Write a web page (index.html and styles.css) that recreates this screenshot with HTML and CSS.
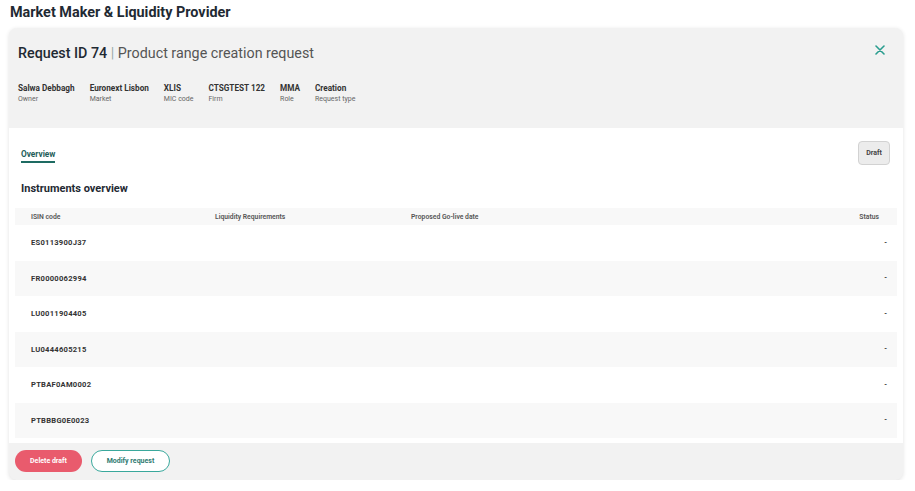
FILE: index.html
```html
<!DOCTYPE html>
<html lang="en">
<head>
    <meta charset="UTF-8">
    <meta name="viewport" content="width=device-width, initial-scale=1.0">
    <title>Market Maker &amp; Liquidity Provider</title>
    <link rel="stylesheet" href="styles.css">
</head>
<body>
    <h1 class="page-title">Market Maker &amp; Liquidity Provider</h1>

    <div class="card">
        <div class="card-head">
            <div class="head-row">
                <h2 class="req-title">Request ID 74 <span class="sep">|</span> <span class="req-sub">Product range creation request</span></h2>
                <button class="close" aria-label="Close">
                    <svg width="10" height="10" viewBox="0 0 10 10"><path d="M1 1 L9 9 M9 1 L1 9" stroke="#2a9d8f" stroke-width="1.6" stroke-linecap="round"/></svg>
                </button>
            </div>
            <div class="meta">
                <div class="meta-item"><b>Salwa Debbagh</b><span>Owner</span></div>
                <div class="meta-item"><b>Euronext Lisbon</b><span>Market</span></div>
                <div class="meta-item"><b>XLIS</b><span>MIC code</span></div>
                <div class="meta-item"><b>CTSGTEST 122</b><span>Firm</span></div>
                <div class="meta-item"><b>MMA</b><span>Role</span></div>
                <div class="meta-item"><b>Creation</b><span>Request type</span></div>
            </div>
        </div>

        <div class="card-body">
            <div class="tabs-row">
                <a class="tab active">Overview</a>
                <button class="btn-draft">Draft</button>
            </div>

            <h3 class="section-title">Instruments overview</h3>

            <div class="table">
                <div class="t-head">
                    <span>ISIN code</span>
                    <span>Liquidity Requirements</span>
                    <span>Proposed Go-live date</span>
                    <span class="right">Status</span>
                </div>
                <div class="t-row"><span class="isin">ES0113900J37</span><span></span><span></span><span class="dash">-</span></div>
                <div class="t-row"><span class="isin">FR0000062994</span><span></span><span></span><span class="dash">-</span></div>
                <div class="t-row"><span class="isin">LU0011904405</span><span></span><span></span><span class="dash">-</span></div>
                <div class="t-row"><span class="isin">LU0444605215</span><span></span><span></span><span class="dash">-</span></div>
                <div class="t-row"><span class="isin">PTBAF0AM0002</span><span></span><span></span><span class="dash">-</span></div>
                <div class="t-row"><span class="isin">PTBBBG0E0023</span><span></span><span></span><span class="dash">-</span></div>
            </div>
        </div>

        <div class="card-foot">
            <button class="btn btn-delete">Delete draft</button>
            <button class="btn btn-modify">Modify request</button>
        </div>
    </div>
</body>
</html>
```

FILE: styles.css
```css
body {
    margin: 0;
    padding: 4px 0 0 0;
    font-family: Roboto, "Liberation Sans", sans-serif;
    color: #1f2a33;
    background: #fff;
}
.page-title {
    font-size: 14.4px;
    font-weight: 700;
    margin: 0 0 0 10px;
    height: 24px;
    line-height: 18px;
}
.card {
    margin: 0 12px 0 9px;
    background: #f2f2f2;
    border-radius: 8px;
    box-shadow: 0 1px 4px rgba(0, 0, 0, 0.12);
    overflow: hidden;
}
.card-head {
    height: 100px;
    box-sizing: border-box;
    padding: 14px 16px 0 9px;
}
.head-row {
    display: flex;
    justify-content: space-between;
    align-items: center;
    height: 22px;
}
.req-title {
    margin: 0;
    font-size: 14.3px;
    font-weight: 500;
    color: #1f2a33;
}
.req-title .sep { color: #9aa; font-weight: 400; }
.req-title .req-sub { color: #555; font-weight: 400; }
.close {
    border: 0;
    background: none;
    padding: 0;
    width: 14px;
    height: 14px;
    display: flex;
    align-items: center;
    justify-content: center;
    margin-top: -6px;
}
.meta {
    display: flex;
    gap: 15px;
    margin-top: 19px;
}
.meta-item {
    display: flex;
    flex-direction: column;
    line-height: 11px;
}
.meta-item b {
    font-size: 8.2px;
    font-weight: 700;
    color: #333;
}
.meta-item span {
    font-size: 7px;
    color: #666;
}
.card-body {
    background: #fff;
    padding: 13px 6px 5px 6px;
}
.tabs-row {
    display: flex;
    justify-content: space-between;
    align-items: center;
    height: 24px;
    padding: 0 7px 0 6px;
}
.tab {
    font-size: 8.3px;
    font-weight: 700;
    color: #1e5e5a;
    padding: 5px 0 2px 0;
    border-bottom: 2px solid #1e6b62;
    margin-top: 1px;
}
.btn-draft {
    font-family: inherit;
    font-size: 7px;
    font-weight: 700;
    color: #444;
    background: #ececec;
    border: 1px solid #d2d2d2;
    border-radius: 4px;
    width: 32px;
    height: 24px;
    padding: 0;
}
.section-title {
    margin: 18px 0 13px 6px;
    font-size: 11px;
    font-weight: 700;
    color: #1f2a33;
    line-height: 12px;
}
.table {
    font-size: 7px;
}
.t-head, .t-row {
    display: grid;
    grid-template-columns: 184px 196px 1fr 60px;
    align-items: center;
    padding: 0 10px 0 16px;
}
.t-head {
    height: 17px;
    background: #f8f8f8;
    color: #555;
    font-weight: 600;
    font-size: 6.8px;
    padding-right: 18px;
}
.t-row {
    height: 35.5px;
}
.t-row:nth-child(odd) { background: #f8f8f8; }
.right { text-align: right; }
.isin {
    font-size: 7.6px;
    font-weight: 700;
    letter-spacing: 0.25px;
    color: #333;
}
.dash {
    text-align: right;
    color: #333;
    font-weight: 700;
}
.card-foot {
    display: flex;
    gap: 9px;
    padding: 7px 6px 8px 6px;
}
.btn {
    font-family: inherit;
    font-size: 7px;
    font-weight: 700;
    height: 22px;
    border-radius: 11px;
    padding: 0;
}
.btn-delete {
    width: 67px;
    background: #e95b6d;
    color: #fff;
    border: 0;
}
.btn-modify {
    width: 79px;
    background: #fff;
    color: #2f7a72;
    border: 1.5px solid #3aa89c;
}
```
